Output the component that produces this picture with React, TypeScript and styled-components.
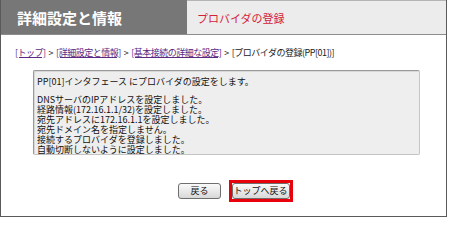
import React from "react";
import styled, { createGlobalStyle } from "styled-components";

const GlobalStyle = createGlobalStyle`
  html, body {
    margin: 0;
    padding: 0;
    background: #ffffff;
    font-family: "Noto Sans CJK JP", "Liberation Sans", sans-serif;
  }
`;

const Frame = styled.div`
  box-sizing: border-box;
  width: 447px;
  height: 217px;
  border: 1px solid #5a5a5a;
  border-top: none;
  display: flex;
  flex-direction: column;
  background: #ffffff;
`;

const TitleBar = styled.header`
  display: flex;
  height: 35px;
  border-bottom: 1px solid #8c8c8c;
  box-sizing: border-box;
`;

const TitleTab = styled.h1`
  margin: 0;
  width: 186px;
  background: #777777;
  color: #ffffff;
  font-size: 15px;
  font-weight: bold;
  display: flex;
  align-items: center;
  padding-left: 16px;
  box-sizing: border-box;
`;

const SubTitle = styled.h2`
  margin: 0;
  flex: 1;
  background: #ececec;
  border-top: 1px solid #b5b5b5;
  color: #d4223a;
  font-size: 11px;
  font-weight: normal;
  display: flex;
  align-items: center;
  padding-left: 10px;
`;

const Content = styled.main`
  flex: 1;
  display: flex;
  flex-direction: column;
  padding: 12px 0 0 14px;
`;

const Breadcrumb = styled.nav`
  font-size: 9px;
  letter-spacing: -0.5px;
  color: #222222;
  line-height: 12px;
  white-space: nowrap;
`;

const Crumb = styled.a`
  color: #5a2a82;
  text-decoration: underline;
`;

const Sep = styled.span`
  margin: 0 3px;
`;

const MessageBox = styled.div`
  margin: 11px 0 0 18px;
  width: 387px;
  height: 85px;
  box-sizing: border-box;
  background: #eeeeee;
  border: 1px solid #c4c4c4;
  border-top-color: #9a9a9a;
  border-left-color: #9a9a9a;
  box-shadow: inset 1px 1px 0 #d8d8d8;
  border-radius: 2px;
  padding: 6px 3px 0;
  font-size: 9px;
  line-height: 10px;
  color: #111111;
`;

const Line = styled.div<{ $gap?: boolean }>`
  white-space: nowrap;
  margin-top: ${(p) => (p.$gap ? "8px" : "0")};
`;

const ButtonRow = styled.div`
  display: flex;
  justify-content: center;
  align-items: center;
  gap: 8px;
  margin-top: 25px;
  padding-left: 10px;
`;

const Focus = styled.div`
  border: 3px solid #e8000b;
  display: flex;
`;

const Button = styled.button<{ $narrow?: boolean }>`
  font-family: inherit;
  font-size: 9px;
  height: 16px;
  padding: ${(p) => (p.$narrow ? "0 1px" : "0 11px")};
  min-width: ${(p) => (p.$narrow ? "auto" : "40px")};
  color: #111111;
  border: 1px solid #6e6e6e;
  border-radius: 3px;
  background: linear-gradient(#fafafa, #d8d8d8);
  line-height: 14px;
`;

export default function App() {
  return (
    <>
      <GlobalStyle />
      <Frame>
        <TitleBar>
          <TitleTab>詳細設定と情報</TitleTab>
          <SubTitle>プロバイダの登録</SubTitle>
        </TitleBar>
        <Content>
          <Breadcrumb>
            <Crumb>[トップ]</Crumb>
            <Sep>&gt;</Sep>
            <Crumb>[詳細設定と情報]</Crumb>
            <Sep>&gt;</Sep>
            <Crumb>[基本接続の詳細な設定]</Crumb>
            <Sep>&gt;</Sep>
            <span>[プロバイダの登録(PP[01])]</span>
          </Breadcrumb>
          <MessageBox>
            <Line>PP[01]インタフェース にプロバイダの設定をします。</Line>
            <Line $gap>DNSサーバのIPアドレスを設定しました。</Line>
            <Line>経路情報(172.16.1.1/32)を設定しました。</Line>
            <Line>宛先アドレスに172.16.1.1を設定しました。</Line>
            <Line>宛先ドメイン名を指定しません。</Line>
            <Line>接続するプロバイダを登録しました。</Line>
            <Line>自動切断しないように設定しました。</Line>
          </MessageBox>
          <ButtonRow>
            <Button>戻る</Button>
            <Focus>
              <Button $narrow>トップへ戻る</Button>
            </Focus>
          </ButtonRow>
        </Content>
      </Frame>
    </>
  );
}
